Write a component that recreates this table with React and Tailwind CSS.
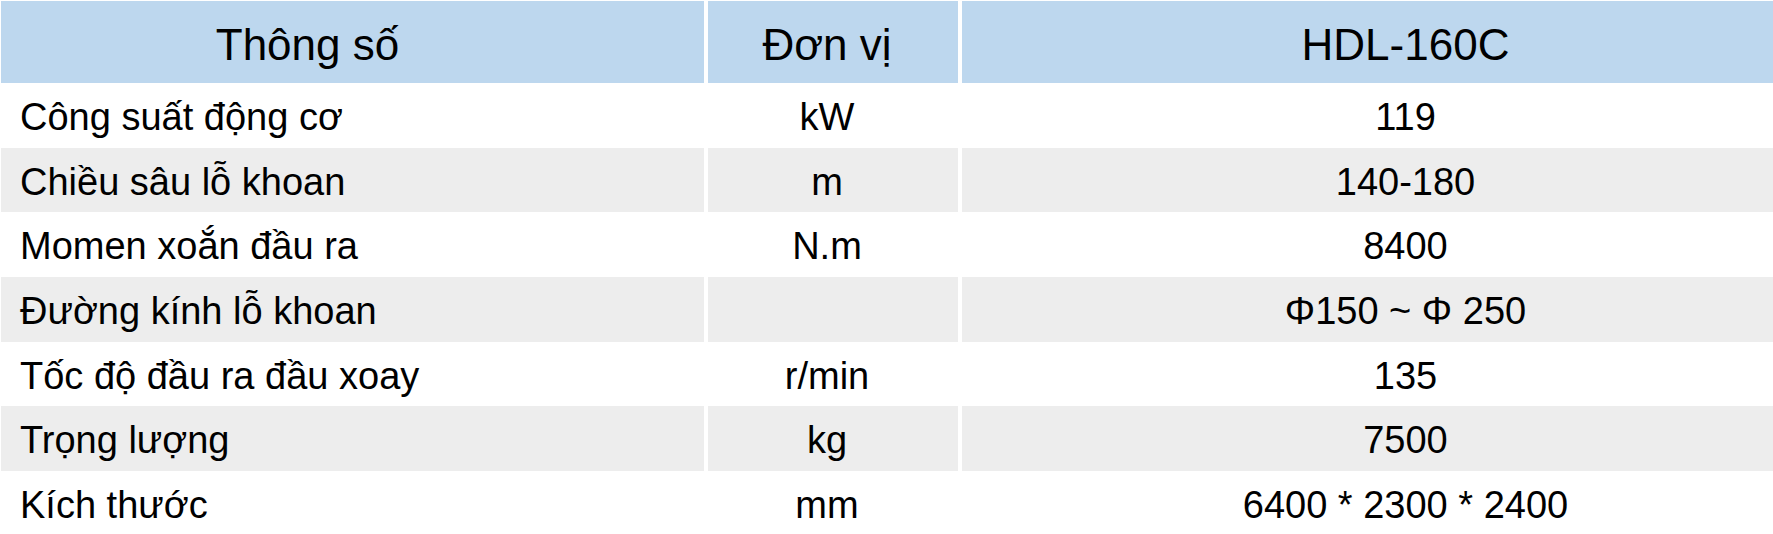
import React from "react";

const rows = [
  ["Công suất động cơ", "kW", "119", "bg-white", "h-[65px]"],
  ["Chiều sâu lỗ khoan", "m", "140-180", "bg-[#ededed]", "h-[64px]"],
  ["Momen xoắn đầu ra", "N.m", "8400", "bg-white", "h-[65px]"],
  ["Đường kính lỗ khoan", "", "Φ150 ~ Φ 250", "bg-[#ededed]", "h-[65px]"],
  ["Tốc độ đầu ra đầu xoay", "r/min", "135", "bg-white", "h-[64px]"],
  ["Trọng lượng", "kg", "7500", "bg-[#ededed]", "h-[65px]"],
  ["Kích thước", "mm", "6400 * 2300 * 2400", "bg-white", "h-[64px]"],
];

export default function App() {
  return (
    <div
      className="w-[1773px] h-[534px] overflow-hidden bg-white pl-[1px] pt-[1px] text-black"
      style={{ fontFamily: '"Liberation Sans", Arial, sans-serif' }}
    >
      <div className="grid grid-cols-[703px_250px_1fr] gap-x-[4px]">
        <div className="h-[82px] bg-[#bdd7ee] flex items-center justify-center pr-[90px] pt-[5px] text-[44px]">
          Thông số
        </div>
        <div className="h-[82px] bg-[#bdd7ee] flex items-center justify-center pr-[12px] pt-[5px] text-[44px]">
          Đơn vị
        </div>
        <div className="h-[82px] bg-[#bdd7ee] flex items-center justify-center pl-[76px] pt-[5px] text-[44px]">
          HDL-160C
        </div>
        {rows.map(([a, b, c, bg, h], i) => (
          <React.Fragment key={i}>
            <div className={`${h} ${bg} flex items-center pl-[19px] pt-[4px] text-[38px]`}>{a}</div>
            <div className={`${h} ${bg} flex items-center justify-center pr-[12px] pt-[4px] text-[38px]`}>{b}</div>
            <div className={`${h} ${bg} flex items-center justify-center pl-[76px] pt-[4px] text-[38px]`}>{c}</div>
          </React.Fragment>
        ))}
      </div>
    </div>
  );
}
